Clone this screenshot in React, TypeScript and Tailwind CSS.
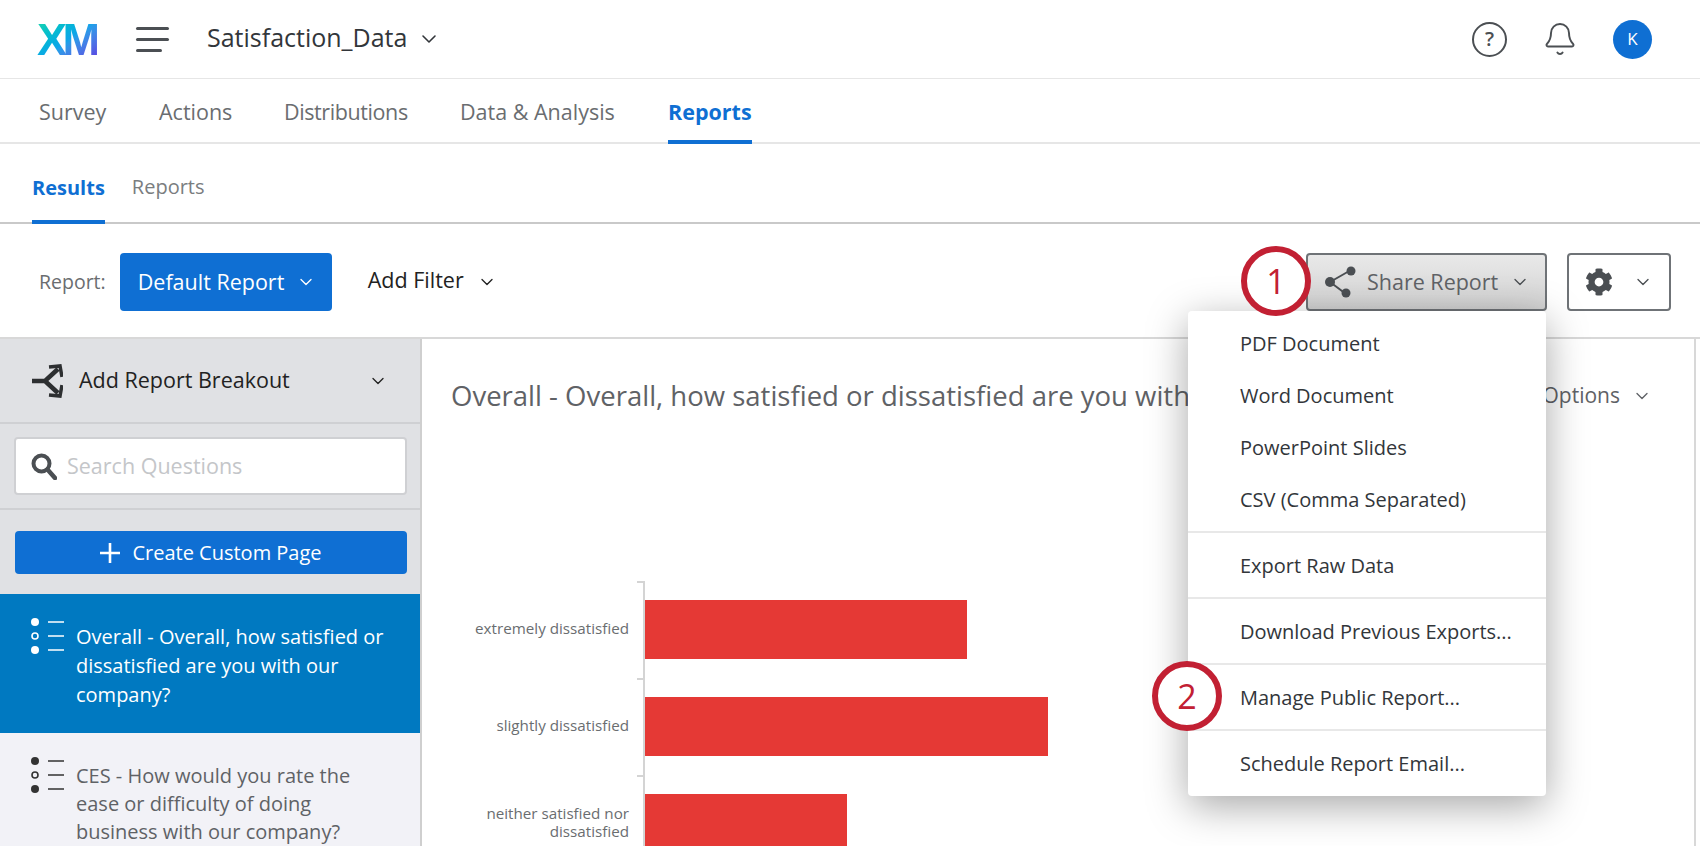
import React from "react";
import { Bell, ChevronDown } from "lucide-react";
import { FaCog } from "react-icons/fa";

const F = "font-['Open_Sans',sans-serif]";

function Chev({ className = "" }: { className?: string }) {
  return <ChevronDown className={className} size={20} strokeWidth={1.6} />;
}

function ListIcon({ color }: { color: string }) {
  return (
    <svg width="34" height="38" viewBox="0 0 34 38" className="shrink-0">
      <circle cx="4" cy="4" r="4" fill={color} />
      <circle cx="4" cy="18" r="3" fill="none" stroke={color} strokeWidth="1.6" />
      <circle cx="4" cy="32" r="4" fill={color} />
      <path d="M17 4h16M17 18h16M17 32h16" stroke={color} strokeWidth="1.6" />
    </svg>
  );
}

function Callout({ n, className }: { n: string; className: string }) {
  return (
    <div className={`absolute w-[70px] h-[70px] rounded-full border-[6px] border-[#c22033] bg-white flex items-center justify-center text-[34px] text-[#c22033] ${className}`}>
      {n}
    </div>
  );
}

const groups = [
  ["PDF Document", "Word Document", "PowerPoint Slides", "CSV (Comma Separated)"],
  ["Export Raw Data"],
  ["Download Previous Exports..."],
  ["Manage Public Report..."],
  ["Schedule Report Email..."],
];

const bars = [
  { label: ["extremely dissatisfied"], w: 322 },
  { label: ["slightly dissatisfied"], w: 403 },
  { label: ["neither satisfied nor", "dissatisfied"], w: 202 },
];

const navItems = [
  { t: "Survey", w: "w-[120px]" },
  { t: "Actions", w: "w-[125px]" },
  { t: "Distributions", w: "w-[176px] tracking-[-0.4px]" },
  { t: "Data & Analysis", w: "w-[208px]" },
];

export default function App() {
  return (
    <div className={`relative w-[1700px] h-[846px] overflow-hidden bg-white ${F}`}>
      {/* top bar */}
      <header className="h-[79px] border-b border-[#e6e6e6] flex items-center pl-[37px] pr-[48px]">
        <span className="w-[62px] text-[45px] leading-none font-bold tracking-[-4.5px] bg-gradient-to-br from-[#1fd8a5] via-[#0ea5e9] to-[#5b2be0] bg-clip-text text-transparent font-['Liberation_Sans',sans-serif]">
          XM
        </span>
        <div className="ml-[37px] w-[33px] flex flex-col gap-[8px]">
          <div className="h-[3px] rounded bg-[#4b4f53] w-full" />
          <div className="h-[3px] rounded bg-[#4b4f53] w-full" />
          <div className="h-[3px] rounded bg-[#4b4f53] w-[26px]" />
        </div>
        <span className="ml-[38px] text-[25px] text-[#32363a] -mt-[2px]">Satisfaction_Data</span>
        <ChevronDown className="ml-[10px] text-[#32363a]" size={24} strokeWidth={1.6} />
        <div className="ml-auto flex items-center">
          <div className="w-[35px] h-[35px] rounded-full border-2 border-[#4b4f53] flex items-center justify-center text-[20px] font-semibold text-[#4b4f53]">?</div>
          <Bell className="ml-[35px] text-[#4b4f53]" size={36} strokeWidth={1.3} />
          <div className="ml-[35px] w-[39px] h-[39px] rounded-full bg-[#0f6fd3] text-white flex items-center justify-center text-[17px] font-medium">K</div>
        </div>
      </header>

      {/* nav */}
      <nav className="h-[65px] border-b-2 border-[#e6e6e6] flex pl-[39px] text-[21.5px] text-[#6a6d70]">
        {navItems.map((n) => (
          <div key={n.t} className={`flex items-center pt-[4px] ${n.w}`}>{n.t}</div>
        ))}
        <div className="flex items-center font-bold text-[#0f6fd3] border-b-4 border-[#0f6fd3] h-[65px] pt-[6px]">Reports</div>
      </nav>

      {/* sub tabs */}
      <div className="h-[80px] border-b-2 border-[#c9c9c9] flex gap-[27px] pl-[32px] text-[20px] text-[#7a7d80]">
        <div className="flex items-center font-bold text-[#0f6fd3] border-b-4 border-[#0f6fd3] h-[80px] pt-[12px]">Results</div>
        <div className="flex items-center pt-[8px]">Reports</div>
      </div>

      {/* toolbar */}
      <div className="h-[113px] flex items-start pt-[29px] pl-[39px] pr-[29px]">
        <span className="h-[58px] flex items-center text-[19.5px] text-[#6a6d70]">Report:</span>
        <button className="ml-[14px] w-[212px] h-[58px] rounded-[4px] bg-[#0f6fd3] text-white text-[21.5px] flex items-center pl-[18px]">
          Default Report
          <Chev className="ml-[12px]" />
        </button>
        <span className="ml-[36px] h-[58px] pb-[3px] flex items-center text-[21.5px] text-[#222]">Add Filter</span>
        <Chev className="ml-[13px] mt-[19px] text-[#222]" />
        <button className="ml-auto w-[241px] h-[58px] rounded-[4px] border-2 border-[#6f7377] bg-gradient-to-b from-[#e9e9e9] to-[#d2d2d2] flex items-center pl-[16px] text-[21.5px] text-[#5f6266]">
          <svg width="32" height="32" viewBox="0 0 32 32" className="shrink-0">
            <path d="M6 16L27 4M6 16L22 28" stroke="#4b4f53" strokeWidth="2" />
            <circle cx="6" cy="16" r="5" fill="#4b4f53" />
            <circle cx="27" cy="5" r="4.5" fill="#4b4f53" />
            <circle cx="22" cy="27" r="4.5" fill="#4b4f53" />
          </svg>
          <span className="ml-[11px]">Share Report</span>
          <Chev className="ml-[12px] text-[#4b4f53]" />
        </button>
        <button className="ml-[20px] w-[104px] h-[58px] rounded-[4px] border-2 border-[#6f7377] bg-white flex items-center pl-[16px] text-[#4b4f53]">
          <FaCog size={28} />
          <Chev className="ml-[20px]" />
        </button>
      </div>

      {/* body */}
      <div className="flex h-[510px] border-t-2 border-[#d8d8d8]">
        <aside className="w-[422px] shrink-0 bg-[#e0e1e4] border-r-2 border-[#cfcfcf] flex flex-col">
          <div className="h-[85px] shrink-0 border-b-2 border-[#cfd0d3] flex items-center pl-[31px] pr-[32px] text-[21.5px] text-[#222]">
            <svg width="32" height="34" viewBox="0 0 32 34" className="shrink-0">
              <path d="M1 17h13L27 5M14 17l13 12" fill="none" stroke="#2d2f31" strokeWidth="4.5" />
              <path d="M18 3l11-1 2 11M18 31l11 1 2-11" fill="none" stroke="#2d2f31" strokeWidth="3.5" />
            </svg>
            <span className="ml-[16px]">Add Report Breakout</span>
            <Chev className="ml-auto" />
          </div>
          <div className="h-[86px] shrink-0 border-b-2 border-[#cfd0d3] flex items-center pl-[14px] pr-[13px]">
            <div className="w-full h-[58px] rounded-[4px] border-2 border-[#cfd0d3] bg-white flex items-center pl-[15px] text-[21.5px] text-[#c4c6c9]">
              <svg width="26" height="27" viewBox="0 0 26 27" className="shrink-0">
                <circle cx="10.5" cy="10.5" r="8" fill="none" stroke="#4b4f53" strokeWidth="4" />
                <path d="M16.5 16.5L24 25" stroke="#4b4f53" strokeWidth="4.5" strokeLinecap="round" />
              </svg>
              <span className="ml-[10px]">Search Questions</span>
            </div>
          </div>
          <div className="h-[84px] shrink-0 pt-[21px] pl-[15px] pr-[13px]">
            <button className="w-full h-[43px] rounded-[4px] bg-[#0f6fd3] text-white text-[20px] flex items-center justify-center gap-[12px]">
              <svg width="20" height="20" viewBox="0 0 20 20"><path d="M10 0v20M0 10h20" stroke="#fff" strokeWidth="2.6" /></svg>
              Create Custom Page
            </button>
          </div>
          <div className="h-[139px] shrink-0 bg-[#0079c1] flex pl-[31px] pt-[24px] text-white text-[20px] leading-[29px]">
            <ListIcon color="#fff" />
            <div className="ml-[11px] w-[325px] pt-[4px]">Overall - Overall, how satisfied or dissatisfied are you with our company?</div>
          </div>
          <div className="flex-1 bg-[#f2f2f7] flex pl-[31px] pt-[24px] text-[#5f6266] text-[20px] leading-[28px] overflow-hidden">
            <ListIcon color="#333" />
            <div className="ml-[11px] w-[300px] pt-[5px]">CES - How would you rate the ease or difficulty of doing business with our company?</div>
          </div>
        </aside>

        <main className="flex-1 min-w-0 mr-[4px] border-r-2 border-[#d8d8d8] overflow-hidden">
          <div className="h-[96px] pt-[35px] pl-[29px] pr-[42px] flex items-start justify-between">
            <h1 className="text-[27.5px] leading-[44px] font-normal text-[#5f6266] whitespace-nowrap">Overall - Overall, how satisfied or dissatisfied are you with</h1>
            <div className="h-[44px] flex items-center text-[21px] text-[#5f6266]">
              Options
              <Chev className="ml-[12px]" />
            </div>
          </div>
          <div className="mt-[146px] flex flex-col">
            {bars.map((b) => (
              <div key={b.w} className="h-[97px] flex shrink-0">
                <div className="w-[208px] shrink-0 flex flex-col items-end justify-center text-[15.2px] leading-[18px] text-[#6a6d70] pr-[1px] pb-[4px]">
                  {b.label.map((l) => <span key={l}>{l}</span>)}
                </div>
                <div className="w-[15px] shrink-0 border-r-2 border-[#d4d4d4]">
                  <div className="ml-[7px] h-[2px] bg-[#d4d4d4]" />
                </div>
                <div className="flex items-center">
                  <div className="h-[59px] bg-[#e53935]" style={{ width: b.w }} />
                </div>
              </div>
            ))}
          </div>
        </main>
      </div>

      {/* dropdown */}
      <div className="absolute left-[1188px] top-[311px] w-[358px] rounded-[4px] bg-white shadow-[0_10px_40px_rgba(0,0,0,0.35)] text-[20px] text-[#32363a] flex flex-col">
        {groups.map((g, i) => (
          <div key={i} className={`pt-[6px] pb-[6px] last:pb-[7px] ${i ? "border-t-2 border-[#e8e8e8]" : ""}`}>
            {g.map((t) => (
              <div key={t} className="h-[52px] pt-[2px] flex items-center pl-[52px]">{t}</div>
            ))}
          </div>
        ))}
      </div>

      <Callout n="1" className="left-[1241px] top-[246px]" />
      <Callout n="2" className="left-[1152px] top-[661px]" />
    </div>
  );
}
